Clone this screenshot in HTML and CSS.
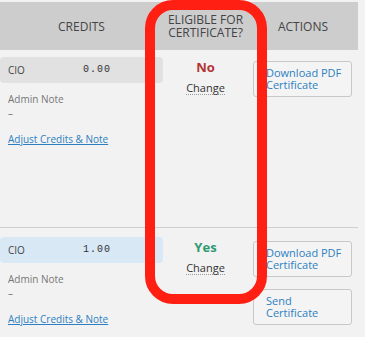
FILE: index.html
```html
<!DOCTYPE html>
<html lang="en">
<head>
    <meta charset="UTF-8">
    <meta name="viewport" content="width=device-width, initial-scale=1.0">
    <title>Certificates</title>
    <link rel="stylesheet" href="styles.css">
</head>
<body>

<div class="cert-table">
    <div class="head-row">
        <div class="head-cell">CREDITS</div>
        <div class="head-cell">ELIGIBLE FOR<br>CERTIFICATE?</div>
        <div class="head-cell">ACTIONS</div>
    </div>

    <div class="row row-first">
        <div class="col-credits">
            <div class="credit-pill">
                <span class="credit-type">CIO</span>
                <span class="credit-value">0.00</span>
            </div>
            <div class="note-label">Admin Note</div>
            <div class="note-text">–</div>
            <a href="#" class="adjust-link">Adjust Credits &amp; Note</a>
        </div>
        <div class="col-eligible">
            <div class="status status-no">No</div>
            <a href="#" class="change-link">Change</a>
        </div>
        <div class="col-actions">
            <button class="action-btn">Download PDF Certificate</button>
        </div>
    </div>

    <div class="row row-second">
        <div class="col-credits">
            <div class="credit-pill active">
                <span class="credit-type">CIO</span>
                <span class="credit-value">1.00</span>
            </div>
            <div class="note-label">Admin Note</div>
            <div class="note-text">–</div>
            <a href="#" class="adjust-link">Adjust Credits &amp; Note</a>
        </div>
        <div class="col-eligible">
            <div class="status status-yes">Yes</div>
            <a href="#" class="change-link">Change</a>
        </div>
        <div class="col-actions">
            <button class="action-btn">Download PDF Certificate</button>
            <button class="action-btn">Send Certificate</button>
        </div>
    </div>

    <div class="highlight"></div>
</div>

</body>
</html>
```

FILE: styles.css
```css
body {
    font-family: "Open Sans", "Noto Sans", sans-serif;
    background-color: #f2f2f2;
    margin: 0;
    padding: 2px 0 0;
    color: #333;
}
.cert-table {
    position: relative;
    width: 358px;
}
.head-row, .row {
    display: grid;
    grid-template-columns: 163px 85px 110px;
}
.head-row {
    background-color: #cdcdcd;
    height: 48px;
    align-items: center;
    text-align: center;
    font-size: 12px;
    line-height: 13px;
    color: #444;
}
.head-cell {
    white-space: nowrap;
}
.row-first {
    height: 177px;
    border-bottom: 1px solid #cfcfcf;
}
.row > div {
    padding-top: 7px;
}
.row-second > div {
    padding-top: 9px;
}
.credit-pill {
    display: flex;
    align-items: center;
    height: 26px;
    padding: 0 8px;
    background-color: #e1e1e1;
    border-radius: 4px;
    font-size: 10px;
}
.credit-pill.active {
    background-color: #d9e8f5;
}
.credit-type {
    width: 75px;
    color: #444;
}
.credit-value {
    font-family: "Liberation Mono", monospace;
    font-size: 10px;
    letter-spacing: 1px;
    margin-top: -2px;
}
.note-label {
    margin: 9px 0 0 8px;
    font-size: 10px;
    color: #777;
}
.note-text {
    margin-left: 8px;
    font-size: 10px;
    line-height: 14px;
    color: #777;
}
.adjust-link {
    display: inline-block;
    margin: 12px 0 0 8px;
    font-size: 10px;
    color: #2d7fc1;
}
.col-eligible {
    text-align: center;
}
.status {
    font-size: 13px;
    font-weight: bold;
    line-height: 16px;
    margin-top: 2px;
}
.status-no {
    color: #b33535;
}
.status-yes {
    color: #2f9a72;
}
.change-link {
    display: inline-block;
    font-size: 11px;
    color: #333;
    text-decoration: none;
    border-bottom: 1px dotted #999;
    line-height: 13px;
}
.row-second .change-link {
    margin-top: 2px;
}
.col-actions {
    display: flex;
    flex-direction: column;
    align-items: flex-start;
    gap: 12px;
    padding-left: 5px;
}
.row-first .col-actions {
    padding-top: 11px;
}
.row-second .col-actions {
    padding-top: 13px;
}
.action-btn {
    width: 99px;
    height: 36px;
    padding: 0 8px 0 12px;
    text-align: left;
    font-family: "Open Sans", "Noto Sans", sans-serif;
    font-size: 11px;
    line-height: 12px;
    color: #2d7fc1;
    background-color: #f4f4f4;
    border: 1px solid #c8c8c8;
    border-radius: 3px;
}
.highlight {
    position: absolute;
    left: 145px;
    top: -2px;
    width: 102px;
    height: 284px;
    border: 10px solid #ff1f13;
    border-radius: 28px;
}
```
